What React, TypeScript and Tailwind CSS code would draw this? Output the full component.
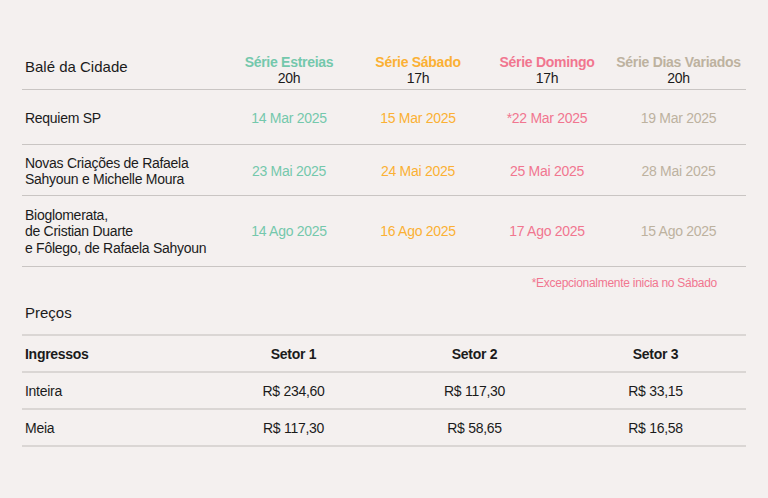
const series = [
  { name: "Série Estreias", time: "20h", color: "text-[#74c8ac]" },
  { name: "Série Sábado", time: "17h", color: "text-[#fbb034]" },
  { name: "Série Domingo", time: "17h", color: "text-[#f1768f]" },
  { name: "Série Dias Variados", time: "20h", color: "text-[#bdb29f]" },
];

const shows = [
  {
    title: ["Requiem SP"],
    dates: ["14 Mar 2025", "15 Mar 2025", "*22 Mar 2025", "19 Mar 2025"],
    h: "h-[55px] pt-[3px]",
  },
  {
    title: ["Novas Criações de Rafaela", "Sahyoun e Michelle Moura"],
    dates: ["23 Mai 2025", "24 Mai 2025", "25 Mai 2025", "28 Mai 2025"],
    h: "h-[51px] pt-[2px]",
  },
  {
    title: ["Bioglomerata,", "de Cristian Duarte", "e Fôlego, de Rafaela Sahyoun"],
    dates: ["14 Ago 2025", "16 Ago 2025", "17 Ago 2025", "15 Ago 2025"],
    h: "h-[71px] pt-[1px]",
  },
];

const prices = [
  { label: "Inteira", values: ["R$ 234,60", "R$ 117,30", "R$ 33,15"] },
  { label: "Meia", values: ["R$ 117,30", "R$ 58,65", "R$ 16,58"] },
];

const cols = "grid grid-cols-[203px_128px_130px_128px_135px]";

export default function App() {
  return (
    <div className="min-h-screen w-full bg-[#f4f0ef] font-['Liberation_Sans',Arial,sans-serif] text-[14px] tracking-[-0.02em] text-[#1b1b1b]">
      <div className="ml-[22px] w-[724px] pt-[54px]">
        {/* schedule */}
        <div className={`${cols} border-b border-[#c9c5c3] pb-[3px]`}>
          <div className="pl-[3px] pt-[5px] text-[15px] leading-[16px] tracking-normal">Balé da Cidade</div>
          {series.map((s) => (
            <div key={s.name} className="flex flex-col items-center leading-[16px]">
              <span className={`font-bold ${s.color}`}>{s.name}</span>
              <span>{s.time}</span>
            </div>
          ))}
        </div>

        {shows.map((row, i) => (
          <div key={i} className={`${cols} ${row.h} items-center border-b border-[#c9c5c3]`}>
            <div className="pl-[3px] leading-[16.5px]">
              {row.title.map((line) => (
                <div key={line}>{line}</div>
              ))}
            </div>
            {row.dates.map((d, j) => (
              <div key={d} className={`text-center ${series[j].color}`}>
                {d}
              </div>
            ))}
          </div>
        ))}

        <div className="mt-[8px] flex justify-end pr-[29px] text-[12px] leading-[16px] text-[#f1768f]">
          *Excepcionalmente inicia no Sábado
        </div>

        {/* prices */}
        <div className="mt-[14px] pb-[13px] pl-[3px] text-[15px] leading-[16px] tracking-normal">Preços</div>
        <div className="border-t-2 border-[#dad6d4]">
          <div className="grid h-[37px] grid-cols-4 items-center border-b-2 border-[#dad6d4] pt-[2px] font-bold">
            <div className="pl-[3px]">Ingressos</div>
            <div className="text-center">Setor 1</div>
            <div className="text-center">Setor 2</div>
            <div className="text-center">Setor 3</div>
          </div>
          {prices.map((p) => (
            <div key={p.label} className="grid h-[37px] grid-cols-4 items-center border-b-2 border-[#dad6d4] pt-[2px]">
              <div className="pl-[3px]">{p.label}</div>
              {p.values.map((v) => (
                <div key={v} className="text-center">
                  {v}
                </div>
              ))}
            </div>
          ))}
        </div>
      </div>
    </div>
  );
}
